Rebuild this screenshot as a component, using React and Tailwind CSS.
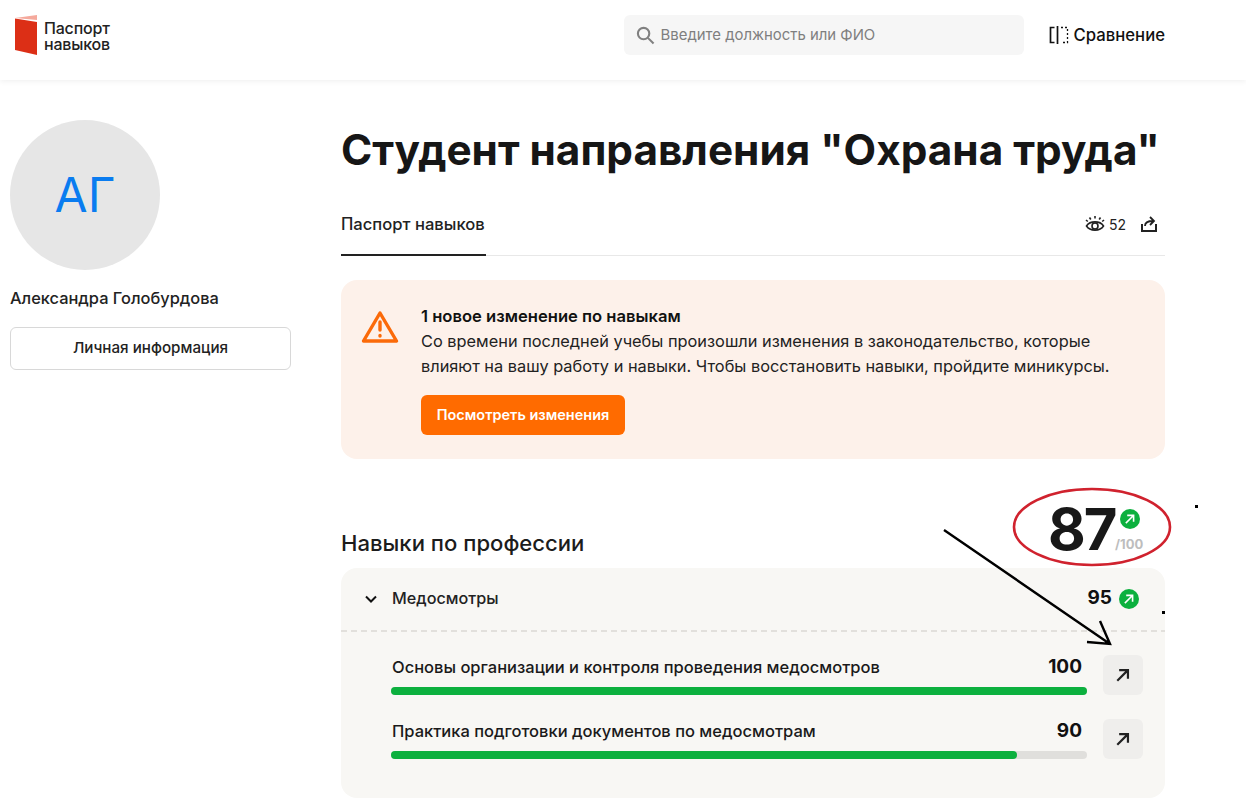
import React from "react";

function UpArrow({ className = "" }) {
  return (
    <svg viewBox="0 0 20 20" className={className} fill="none" stroke="currentColor" strokeWidth="2" strokeLinecap="square">
      <path d="M5.5 14.5 L14 6 M7.5 5.5 H14.5 V12.5" />
    </svg>
  );
}

function GreenBadge({ size }) {
  return (
    <span className={`flex items-center justify-center rounded-full bg-[#0cb03e] text-white ${size}`}>
      <UpArrow className="w-[80%] h-[80%]" />
    </span>
  );
}

function Skill({ title, value, width }) {
  return (
    <div className="flex items-start gap-4 h-10">
      <div className="flex-1">
        <div className="flex items-center justify-between h-6 mb-2 pt-[1px]">
          <span className="text-[16.5px] font-medium text-[#1a1a1a] leading-6 pl-[1px]">{title}</span>
          <span className="text-[19px] font-bold text-[#111] leading-6 mr-[5px]">{value}</span>
        </div>
        <div className="h-2 rounded-full bg-[#e0dfdc]">
          <div className="h-2 rounded-full bg-[#0cb03e]" style={{ width }} />
        </div>
      </div>
      <button className="w-10 h-10 rounded-md bg-[#efeeec] flex items-center justify-center text-[#222]">
        <UpArrow className="w-[22px] h-[22px]" />
      </button>
    </div>
  );
}

export default function App() {
  return (
    <div className="relative h-[807px] overflow-hidden bg-white text-[#1a1a1a] font-['Inter',sans-serif]">
      <header className="h-20 shadow-[0_1px_6px_rgba(0,0,0,0.07)] flex items-center pb-[10px] pl-[15px] pr-[81px] bg-white">
        <svg viewBox="0 0 23 40" className="w-[23px] h-10">
          <path d="M0 3 L22 0 V5 Z" fill="#f5a99c" />
          <path d="M0 3.5 L22 7 V40 L0 35 Z" fill="#dc2f16" />
        </svg>
        <div className="ml-[6px] mt-[2px] text-[16px] leading-[16px] font-medium text-[#222] -tracking-[0.2px]">
          Паспорт
          <br />
          навыков
        </div>
        <div className="ml-auto w-[400px] h-10 rounded-md bg-[#f6f6f6] flex items-center pl-3 text-[#7f7f7f]">
          <svg viewBox="0 0 20 20" className="w-[19px] h-[19px]" fill="none" stroke="#808080" strokeWidth="2.2">
            <circle cx="8" cy="8" r="6" />
            <path d="M12.5 12.5 L18.5 18.5" />
          </svg>
          <span className="ml-[6px] pt-[1px] text-[14.9px]">Введите должность или ФИО</span>
        </div>
        <svg viewBox="0 0 20 18" className="ml-[25px] w-5 h-[18px]" fill="none" stroke="#111" strokeWidth="1.7">
          <path d="M5.5 1.5 H1.5 V16.5 H5.5" />
          <path d="M8.5 0 V18" />
          <path d="M12 1.5 H18.5 V16.5 H12" strokeDasharray="2 2" strokeWidth="1.3" />
        </svg>
        <span className="ml-[5px] pt-[1px] text-[16.7px] font-medium text-[#111]">Сравнение</span>
      </header>

      <div className="flex pt-10 pl-[10px]">
        <aside className="w-[281px]">
          <div className="w-[150px] h-[150px] rounded-full bg-[#e6e6e6] flex items-center justify-center text-[#0a7cf0] text-[48px]">
            АГ
          </div>
          <div className="mt-[18px] text-[16.4px] font-medium leading-5 text-[#222]">Александра Голобурдова</div>
          <button className="mt-[19px] w-[281px] h-[43px] rounded-md border border-[#d8d8d8] text-[15.2px] font-medium text-[#222]">
            Личная информация
          </button>
        </aside>

        <main className="ml-[50px] w-[824px]">
          <h1 className="text-[42.3px] leading-[60px] font-bold text-[#161616] whitespace-nowrap">
            Студент направления "Охрана труда"
          </h1>
          <div className="mt-[29px] h-[47px] border-b border-[#e8e8e8] flex items-start justify-between">
            <div className="h-[47px] w-[145px] border-b-2 border-[#222] text-[16.6px] font-medium leading-[30px] text-[#222]">
              Паспорт навыков
            </div>
            <div className="flex items-center h-[30px] pr-[7px] text-[#222]">
              <svg viewBox="0 0 20 20" className="w-5 h-5 -mt-[1px]" fill="none" stroke="#222" strokeWidth="1.6">
                <path d="M1.5 12 C5 6.5 15 6.5 18.5 12 C15 17.5 5 17.5 1.5 12 Z" />
                <circle cx="10" cy="12" r="3" />
                <path d="M10 2 V4.5 M4.5 3.5 L5.8 5.5 M15.5 3.5 L14.2 5.5 M1 6 L2.8 7.5 M19 6 L17.2 7.5" />
              </svg>
              <span className="ml-[4px] text-[14px]">52</span>
              <svg viewBox="0 0 18 18" className="ml-[14px] w-[18px] h-[18px]" fill="none" stroke="#222" strokeWidth="2">
                <path d="M2 9 V16 H16 V9" />
                <path d="M5 11 C5 8 8 6 13 6 M10 2 L14 6 L10 10" strokeWidth="1.8" />
              </svg>
            </div>
          </div>

          <section className="mt-6 h-[179px] rounded-2xl bg-[#fdf1ea] flex pl-5 pt-[26px]">
            <svg viewBox="0 0 38 34" className="w-[38px] h-[34px] mt-[4px]" fill="none" stroke="#fb6a09" strokeWidth="3.4" strokeLinejoin="round" strokeLinecap="round">
              <path d="M19 3 L35.5 31 H2.5 Z" />
              <path d="M19 12 V20" />
              <path d="M19 25.5 V26" />
            </svg>
            <div className="ml-[22px]">
              <div className="text-[16.6px] font-semibold leading-[20px] text-[#111]">1 новое изменение по навыкам</div>
              <p className="mt-[3px] text-[16.35px] leading-[25px] text-[#222] w-[720px]">
                <span className="block whitespace-nowrap">Со времени последней учебы произошли изменения в законодательство, которые</span>
                <span className="block whitespace-nowrap">влияют на вашу работу и навыки. Чтобы восстановить навыки, пройдите миникурсы.</span>
              </p>
              <button className="mt-4 h-10 w-[204px] rounded-md bg-[#ff6b00] text-white text-[14.5px] font-semibold">
                Посмотреть изменения
              </button>
            </div>
          </section>

          <div className="mt-[37px] h-[72px] flex items-end justify-between">
            <h2 className="text-[22.1px] font-medium leading-7 mb-[11px] text-[#1c1c1c]">Навыки по профессии</h2>
            <div className="relative w-[96px] h-[72px] mr-[21px] text-[#181818]">
              <span className="absolute left-0 -top-[3px] text-[58px] font-bold leading-[72px] tracking-[-2px]">87</span>
              <span className="absolute left-[72px] top-[13px]"><GreenBadge size="w-5 h-5" /></span>
              <span className="absolute left-[67px] top-[40px] text-[13px] font-bold text-[#bdbdbd] leading-4">/100</span>
            </div>
          </div>

          <section className="h-[230px] rounded-2xl bg-[#f8f7f4]">
            <div className="h-[62px] flex items-center pl-[22px] pr-[26px] pb-[1px]">
              <svg viewBox="0 0 16 16" className="w-4 h-4" fill="none" stroke="#111" strokeWidth="2">
                <path d="M3 5.5 L8 10.5 L13 5.5" />
              </svg>
              <span className="ml-[13px] text-[16.2px] font-medium text-[#222]">Медосмотры</span>
              <span className="ml-auto text-[19px] font-bold text-[#111]">95</span>
              <span className="ml-[7px]"><GreenBadge size="w-5 h-5" /></span>
            </div>
            <div className="h-[1.5px] bg-[repeating-linear-gradient(90deg,#e2e0dc_0_6px,transparent_6px_10px)]" />
            <div className="pl-[50px] pr-[22px] pt-[23px] flex flex-col gap-6">
              <Skill title="Основы организации и контроля проведения медосмотров" value="100" width="100%" />
              <Skill title="Практика подготовки документов по медосмотрам" value="90" width="90%" />
            </div>
          </section>
        </main>
      </div>

      <svg className="absolute inset-0 w-[1246px] h-[807px] pointer-events-none" viewBox="0 0 1246 807" fill="none">
        <ellipse cx="1092" cy="527" rx="78" ry="38" stroke="#d0222e" strokeWidth="2.6" />
        <path d="M944 530 L1110 644 M1100 621 L1110 644 L1087 642" stroke="#000" strokeWidth="2.4" />
        <rect x="1195" y="505" width="3" height="3" fill="#000" />
        <rect x="1162" y="611" width="3" height="3" fill="#000" />
      </svg>
    </div>
  );
}
